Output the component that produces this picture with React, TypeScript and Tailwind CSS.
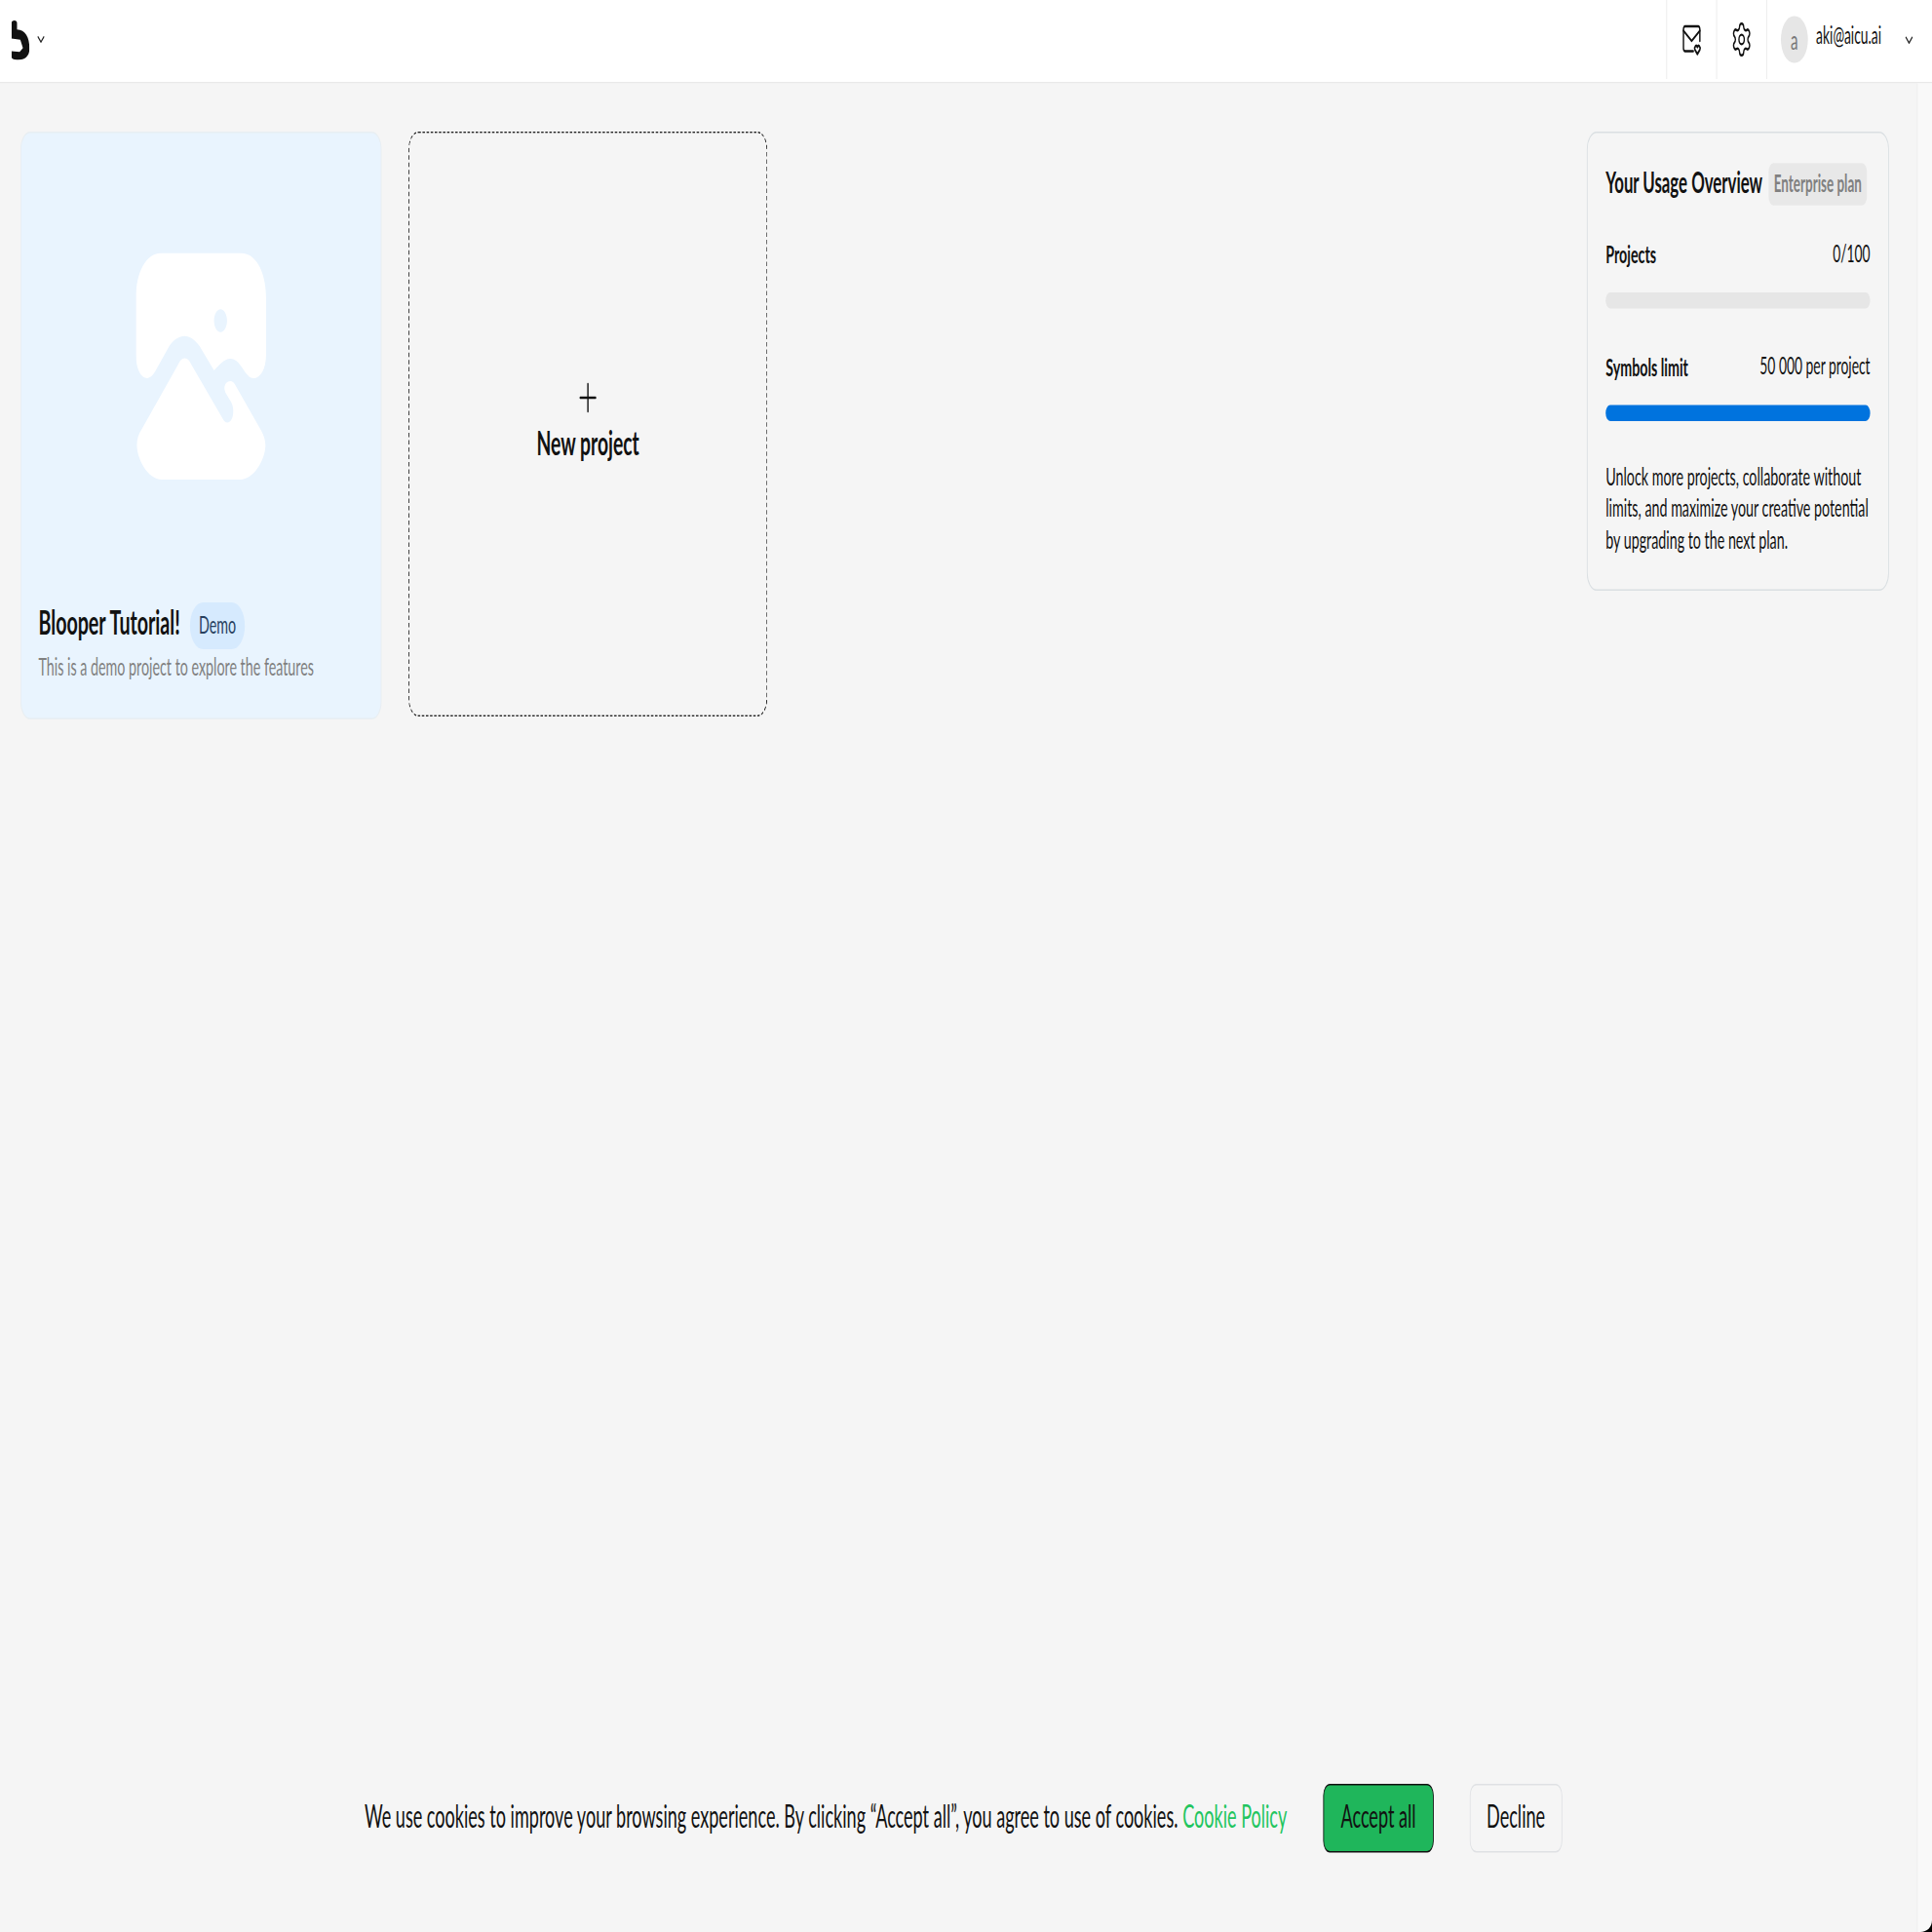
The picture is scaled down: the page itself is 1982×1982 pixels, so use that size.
import { ChevronDown, Plus, Settings } from "lucide-react";

// The reference is a page squeezed into a square shot, so it is laid out at
// its own size and then scaled as a whole.
function Logo() {
  return (
    <svg viewBox="0 0 55 123" preserveAspectRatio="none" className="h-[27px] w-[22px]">
      <path
        fill="#111"
        d="M0 8C0 3 4 0 9 0C14 0 17 3 17 8V28C42 30 55 50 55 88C55 112 40 123 20 123C10 123 0 120 0 113V96L25 98L35 86L27 60L0 56Z"
      />
    </svg>
  );
}

function MailHeart() {
  return (
    <svg viewBox="0 0 24 24" fill="none" stroke="#111" strokeWidth="1.7" strokeLinecap="round" strokeLinejoin="round" className="h-[24px] w-[24px]">
      <path d="M14 20H4a2 2 0 0 1-2-2V5a2 2 0 0 1 2-2h16a2 2 0 0 1 2 2v8" />
      <path d="m2 6 10 7 10-7" />
      <path d="M19 22l-3-3a1.7 1.7 0 0 1 3-1.8a1.7 1.7 0 0 1 3 1.8z" />
    </svg>
  );
}

function PictureIcon() {
  return (
    <svg viewBox="0 0 400 695" preserveAspectRatio="none" className="h-[155px] w-[159px]">
      <path
        fill="#fff"
        fillRule="evenodd"
        d="M80 0H320C370 0 400 60 400 140V310C400 360 380 384 362 384C345 384 335 365 325 350C310 325 295 324 290 324C270 324 255 345 240 360L195 285C180 265 165 255 150 255C130 255 112 270 100 290L60 362C50 380 40 384 35 384C15 384 0 355 0 310V140C0 60 30 0 80 0ZM260 173C249 173 240 189 240 208C240 227 249 243 260 243C271 243 280 227 280 208C280 189 271 173 260 173Z"
      />
      <path
        fill="#fff"
        d="M150 323C160 323 165 332 172 345L265 505C270 515 275 520 281 520C292 520 299 505 299 485C299 470 295 460 288 450L275 428C272 420 272 415 272 415C272 402 280 393 290 393C297 393 302 398 307 408L385 545C393 560 398 575 398 590C398 630 365 695 320 695H80C35 695 3 630 3 590C3 570 8 555 18 540L128 345C135 332 140 323 150 323Z"
      />
    </svg>
  );
}

function UsageRow({ label, value, barClass }: { label: string; value: string; barClass: string }) {
  return (
    <div className="flex flex-col">
      <div className="flex items-start justify-between">
        <span className="text-[17px] leading-[22px] font-bold text-[#111]">{label}</span>
        <span className="text-[16.5px] leading-[20px] text-[#111]">{value}</span>
      </div>
      <div className={`mt-[15px] h-[11px] rounded-full ${barClass}`} />
    </div>
  );
}

export default function App() {
  return (
    <div className="relative h-[1982px] w-[1982px] overflow-hidden">
      <div className="relative flex h-[1322px] w-[2360px] origin-top-left scale-x-[0.84] scale-y-[1.5] flex-col overflow-hidden bg-[#f5f5f5] font-['Lato',sans-serif]">
        <header className="flex h-[57px] shrink-0 items-center justify-between border-b border-[#e9e9e9] bg-white">
          <div className="flex -translate-y-[1px] items-center gap-[7px] pl-[14px]">
            <Logo />
            <ChevronDown className="h-[14px] w-[14px] text-[#222]" />
          </div>
          <div className="flex h-[54px] items-stretch self-start">
            <div className="flex w-[61px] items-center justify-center border-l border-[#e9e9e9]">
              <MailHeart />
            </div>
            <div className="flex w-[61px] items-center justify-center border-l border-[#e9e9e9]">
              <Settings className="h-[26px] w-[26px] text-[#111]" strokeWidth={1.5} />
            </div>
            <div className="flex w-[203px] items-center border-l border-[#e9e9e9] pl-[17px]">
              <div className="flex h-[32px] w-[33px] items-center justify-center rounded-full bg-[#e6e6e6] text-[18px] text-[#777]">a</div>
              <span className="ml-[10px] -translate-y-[3px] text-[16.5px] text-[#111]">aki@aicu.ai</span>
              <ChevronDown className="ml-auto mr-[21px] h-[15px] w-[15px] text-[#222]" />
            </div>
          </div>
        </header>

        <div className="flex flex-1">
          <main className="flex flex-1 items-start justify-between pt-[32.5px] pr-[34px] pl-[25px]">
            <div className="flex items-start gap-[33px]">
              <div className="flex h-[402px] w-[441px] flex-col items-center rounded-xl border border-[#e8eef2] bg-[#e9f4fe] pt-[82px]">
                <PictureIcon />
                <div className="mt-auto w-full px-[21px] pb-[22px]">
                  <div className="flex items-center gap-[12px]">
                    <span className="text-[23.4px] font-bold text-[#111]">Blooper Tutorial!</span>
                    <span className="flex h-[32px] translate-y-[3px] items-center rounded-full bg-[#d6eafe] px-[11px] pb-[4px] text-[17px] text-[#27405e]">Demo</span>
                  </div>
                  <p className="text-[17px] text-[#808080]">This is a demo project to explore the features</p>
                </div>
              </div>
              <div className="flex h-[400px] w-[438px] flex-col items-center justify-center rounded-xl border border-dashed border-[#222] pb-[3px]">
                <Plus className="h-[32px] w-[32px] translate-y-[1px] text-[#111]" strokeWidth={1.25} />
                <span className="-translate-y-[1.5px] text-[23px] font-bold text-[#111]">New project</span>
              </div>
            </div>

            <aside className="flex h-[314px] w-[369px] flex-col rounded-xl border border-[#dadfe2] px-[22px] pt-[18.5px]">
              <div className="flex items-center justify-between">
                <span className="text-[20px] font-bold text-[#111]">Your Usage Overview</span>
                <span className="mr-[4px] flex h-[29px] w-[120px] translate-y-[1.5px] items-center justify-center rounded-md bg-[#e8e8e8] text-[16px] font-bold text-[#808080]">Enterprise plan</span>
              </div>
              <div className="mt-[23.5px] flex flex-col gap-[29px]">
                <UsageRow label="Projects" value="0/100" barClass="bg-[#e6e6e6]" />
                <UsageRow label="Symbols limit" value="50 000 per project" barClass="bg-[#0073de]" />
              </div>
              <p className="mt-[27px] text-[17px] leading-[21.5px] text-[#111]">
                Unlock more projects, collaborate without limits, and maximize your creative potential by upgrading to the next plan.
              </p>
            </aside>
          </main>
          <div className="w-[19px] shrink-0 border-l border-[#ececec] bg-[#f9f9f9]" />
        </div>

        {/* Cookie banner */}
        <div className="absolute right-[7px] bottom-[55px] left-0 flex items-center justify-center gap-[44px]">
          <p className="-translate-y-[1px] text-[21.5px] text-[#111]">
            We use cookies to improve your browsing experience. By clicking “Accept all”, you agree to use of cookies.{" "}
            <span className="text-[#22c55e]">Cookie Policy</span>
          </p>
          <button className="h-[47px] w-[135px] rounded-lg border border-[#111] bg-[#1fb65b] pb-[3px] text-[21.5px] text-[#111]">Accept all</button>
          <button className="h-[47px] w-[113px] rounded-lg border border-[#dfe1e4] pb-[3px] text-[21.5px] text-[#111]">Decline</button>
        </div>
      </div>

      {/* Window corner at the bottom right of the shot */}
      <svg viewBox="0 0 12 12" className="absolute right-0 bottom-0 h-[12px] w-[12px]">
        <path fill="#000" d="M12 0V12H0C7 12 12 7 12 0Z" />
      </svg>
    </div>
  );
}
